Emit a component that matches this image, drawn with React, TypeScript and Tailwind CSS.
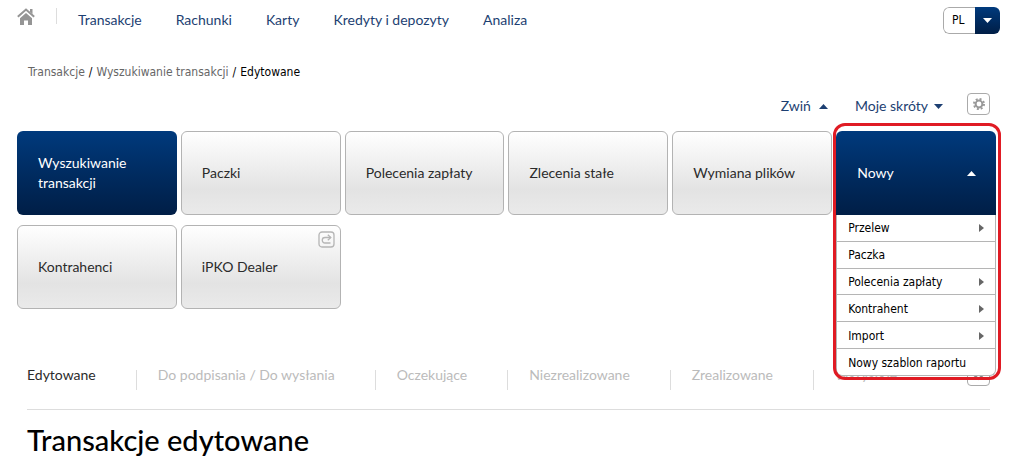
const navItems = ["Transakcje", "Rachunki", "Karty", "Kredyty i depozyty", "Analiza"];

const tiles = [
  { label: "Wyszukiwanie transakcji", active: true },
  { label: "Paczki" },
  { label: "Polecenia zapłaty" },
  { label: "Zlecenia stałe" },
  { label: "Wymiana plików" },
];

const moreTiles = [{ label: "Kontrahenci" }, { label: "iPKO Dealer", external: true }];

const menuItems = [
  { label: "Przelew", submenu: true },
  { label: "Paczka" },
  { label: "Polecenia zapłaty", submenu: true },
  { label: "Kontrahent", submenu: true },
  { label: "Import", submenu: true },
  { label: "Nowy szablon raportu" },
];

const tabs = [
  "Edytowane",
  "Do podpisania / Do wysłania",
  "Oczekujące",
  "Niezrealizowane",
  "Zrealizowane",
  "Wszystkie",
];

const Arrow = ({ dir }: { dir: "up" | "down" }) => (
  <svg width="9" height="5" viewBox="0 0 9 5" fill="currentColor" aria-hidden="true">
    <path d={dir === "up" ? "M0 5 4.5 0 9 5z" : "M0 0h9L4.5 5z"} />
  </svg>
);

const HomeIcon = () => (
  <svg width="18" height="17" viewBox="0 0 18 17" aria-hidden="true">
    <path d="M.8 8.800 9 1.500l8.200 7.300" fill="none" stroke="#959595" strokeWidth="2" />
    <path d="M13 1h2.500v5L13 3.700z" fill="#959595" />
    <path d="M3 10.200 9 5l6 5.200V17h-4v-4.500H7V17H3z" fill="#959595" />
  </svg>
);

const GearIcon = () => (
  <svg width="12" height="12" viewBox="0 0 12 12" fill="none" stroke="#999" aria-hidden="true">
    <circle cx="6" cy="6" r="3.400" strokeWidth="2" />
    <circle cx="6" cy="6" r="5" strokeWidth="2" strokeDasharray="1.960 1.967" />
  </svg>
);

const ExternalIcon = () => (
  <svg
    className="absolute top-[5px] right-[5px]"
    width="17"
    height="17"
    viewBox="0 0 17 17"
    fill="none"
    stroke="#b5b5b5"
    aria-hidden="true"
  >
    <rect x="1" y="1" width="15" height="15" rx="3" strokeWidth="1.300" />
    <path d="M12.500 6.500H7a2.700 2.700 0 0 0 0 5.500h5.500" strokeWidth="1.300" />
    <path d="m9.800 3.700 3 2.800-3 2.800" strokeWidth="1.300" />
  </svg>
);

type TileProps = { label: string; active?: boolean; external?: boolean };

const Tile = ({ label, active, external }: TileProps) => (
  <a
    href="#"
    className={`relative flex h-[84px] items-center rounded-md border pr-7 pl-5 ${
      active
        ? "border-transparent bg-linear-to-b from-[#003a7d] to-[#001e46] bg-origin-border text-white"
        : "border-[#b3b3b3] bg-linear-to-b from-white via-[#e3e3e3] via-70% to-[#eaeaea] text-[#2b2b2b]"
    }`}
  >
    {label}
    {external && <ExternalIcon />}
  </a>
);

const NewMenu = () => (
  <div className="relative z-10">
    <button
      type="button"
      aria-expanded="true"
      className="flex h-[84px] w-full items-center justify-between rounded-t-md bg-linear-to-b from-[#003a7d] to-[#001e46] pr-5 pl-[21px] text-white"
    >
      Nowy
      <Arrow dir="up" />
    </button>
    <ul className="absolute top-full right-0 left-0 flex h-[161px] flex-col rounded-b-md border border-t-0 border-[#b5b5b5] bg-white font-['DejaVu_Sans_Condensed','DejaVu_Sans',sans-serif] text-xs text-black">
      {menuItems.map((item) => (
        <li key={item.label} className="flex flex-1 border-b border-[#b5b5b5] last:border-b-0">
          <button type="button" className="flex flex-1 items-center justify-between pt-px pr-[11px] pl-[11px] whitespace-nowrap">
            {item.label}
            {item.submenu && (
              <svg width="5" height="8" viewBox="0 0 5 8" fill="#666" aria-hidden="true">
                <path d="M0 0 5 4 0 8z" />
              </svg>
            )}
          </button>
        </li>
      ))}
    </ul>
    {/* Highlight frame around the opened menu */}
    <div className="pointer-events-none absolute -top-2 -right-[5px] -left-[3px] h-[257px] rounded-xl border-[3px] border-[#e01b24]"></div>
  </div>
);

export default function App() {
  return (
    <div className="bg-white pr-6 pl-[17px] font-[Lato,sans-serif] text-sm leading-5 text-[#2b2b2b]">
      <header className="flex h-10 items-center">
        <a href="#" aria-label="Strona główna" className="mb-2">
          <HomeIcon />
        </a>
        <span className="mb-2 ml-[21px] h-4 w-px bg-[#ddd]"></span>
        <nav className="ml-[21px] flex gap-[34px] text-[#1d3f72]">
          {navItems.map((item) => (
            <a key={item} href="#">
              {item}
            </a>
          ))}
        </nav>
        <label className="ml-auto flex h-[27px] w-[57px] overflow-hidden rounded-md">
          <select
            aria-label="Język"
            className="w-8 appearance-none rounded-l-md border border-r-0 border-[#aaa] bg-white pl-2 font-['DejaVu_Sans_Condensed','DejaVu_Sans',sans-serif] text-xs text-black"
          >
            <option>PL</option>
          </select>
          <span className="flex flex-1 items-center justify-center bg-linear-to-b from-[#003a7d] to-[#001e46] text-white">
            <Arrow dir="down" />
          </span>
        </label>
      </header>

      <div className="mt-[22px] ml-[11px] flex gap-1 font-['DejaVu_Sans_Condensed','DejaVu_Sans',sans-serif] text-xs leading-5 text-black">
        <a href="#" className="text-[#666]">
          Transakcje
        </a>
        <span>/</span>
        <a href="#" className="text-[#666]">
          Wyszukiwanie transakcji
        </a>
        <span>/</span>
        <span>Edytowane</span>
      </div>

      <div className="mt-3 mr-2.5 flex h-6 items-center justify-end text-[#1d3f72]">
        <button type="button" className="flex items-center gap-2">
          Zwiń <Arrow dir="up" />
        </button>
        <button type="button" className="ml-[27px] flex items-center gap-1.5">
          Moje skróty <Arrow dir="down" />
        </button>
        <button
          type="button"
          aria-label="Ustawienia"
          className="mb-1 ml-6 flex h-[22px] w-[23px] items-center justify-center rounded border border-[#aaa]"
        >
          <GearIcon />
        </button>
      </div>

      <div className="mt-[13px] mr-1 grid grid-cols-6 gap-x-1 gap-y-2.5">
        {tiles.map((tile) => (
          <Tile key={tile.label} {...tile} />
        ))}
        <NewMenu />
        {moreTiles.map((tile) => (
          <Tile key={tile.label} {...tile} />
        ))}
      </div>

      <div className="mt-14 mr-2.5 ml-2.5 flex h-[45px] items-start border-b border-[#ddd]">
        <nav className="flex gap-[21px] whitespace-nowrap">
          {tabs.map((tab, index) => (
            <div key={tab} className="flex items-start">
              <a href="#" className={index === 0 ? "text-[#2b2b2b]" : "text-[#bbb]"}>
                {tab}
              </a>
              {index < tabs.length - 1 && <span className="mt-[5px] ml-10 h-5 w-px bg-[#ddd]"></span>}
            </div>
          ))}
        </nav>
        <button
          type="button"
          aria-label="Więcej"
          className="ml-auto flex h-[21px] w-[23px] items-center justify-center rounded border border-[#aaa] text-[#888]"
        >
          <svg width="11" height="11" viewBox="0 0 11 11" fill="none" stroke="currentColor" strokeWidth="2" aria-hidden="true">
            <path d="m1 5 4.500 4L10 5" />
          </svg>
        </button>
      </div>

      <h1 className="mt-3 ml-2.5 text-[29px] leading-9 font-medium text-black">Transakcje edytowane</h1>
    </div>
  );
}
